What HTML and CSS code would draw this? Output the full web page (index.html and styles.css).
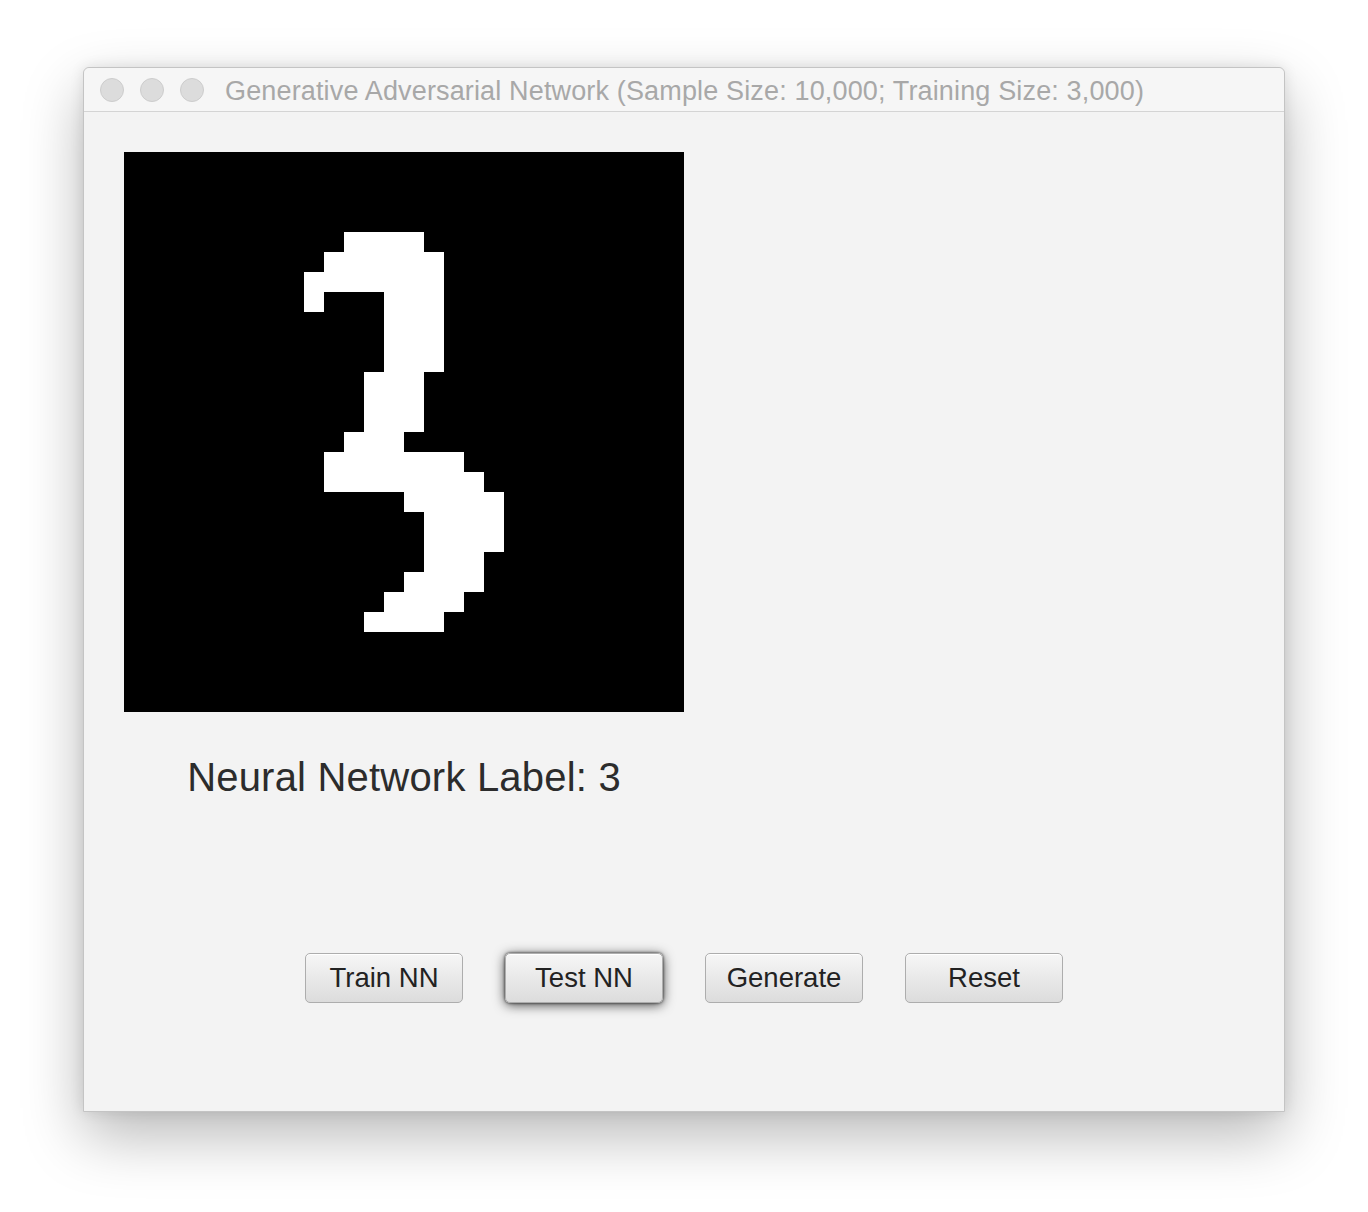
FILE: index.html
```html
<!DOCTYPE html>
<html>
<head>
<meta charset="utf-8">
<title>Generative Adversarial Network</title>
<link rel="stylesheet" href="styles.css">
</head>
<body>
<div class="window">
  <div class="titlebar">
    <div class="lights">
      <span class="light"></span>
      <span class="light"></span>
      <span class="light"></span>
    </div>
    <div class="title">Generative Adversarial Network (Sample Size: 10,000; Training Size: 3,000)</div>
  </div>
  <div class="content">
    <div class="left">
      <svg class="digit" viewBox="0 0 28 28" width="560" height="560" shape-rendering="crispEdges">
        <rect x="0" y="0" width="28" height="28" fill="#000"/>
        <g fill="#fff">
          <rect x="11" y="4" width="4" height="1"/>
          <rect x="10" y="5" width="6" height="1"/>
          <rect x="9" y="6" width="7" height="1"/>
          <rect x="9" y="7" width="1" height="1"/>
          <rect x="13" y="7" width="3" height="4"/>
          <rect x="12" y="11" width="3" height="3"/>
          <rect x="11" y="14" width="3" height="1"/>
          <rect x="10" y="15" width="7" height="1"/>
          <rect x="10" y="16" width="8" height="1"/>
          <rect x="14" y="17" width="5" height="1"/>
          <rect x="15" y="18" width="4" height="2"/>
          <rect x="15" y="20" width="3" height="1"/>
          <rect x="14" y="21" width="4" height="1"/>
          <rect x="13" y="22" width="4" height="1"/>
          <rect x="12" y="23" width="4" height="1"/>
        </g>
      </svg>
      <div class="label">Neural Network Label: 3</div>
    </div>
    <div class="buttons">
      <button class="btn">Train NN</button>
      <button class="btn focused">Test NN</button>
      <button class="btn">Generate</button>
      <button class="btn">Reset</button>
    </div>
  </div>
</div>
</body>
</html>
```
FILE: styles.css
```css
html, body {
  margin: 0;
  padding: 0;
  background: #ffffff;
}
body {
  min-height: 1212px;
  box-sizing: border-box;
  padding-top: 67px;
  padding-bottom: 100px;
  display: flex;
  justify-content: center;
  align-items: flex-start;
  font-family: "Liberation Sans", Arial, sans-serif;
}
.window {
  width: 1202px;
  height: 1045px;
  box-sizing: border-box;
  background: #f3f3f3;
  border: 1px solid #c4c4c4;
  border-radius: 6px 6px 0 0;
  box-shadow: 0 24px 60px rgba(0, 0, 0, 0.28), 0 0 14px rgba(0, 0, 0, 0.10);
  display: flex;
  flex-direction: column;
}
.titlebar {
  height: 43px;
  flex: 0 0 auto;
  background: #f6f6f6;
  border-bottom: 1px solid #d4d4d4;
  border-radius: 6px 6px 0 0;
  display: flex;
  align-items: center;
  padding-left: 16px;
}
.lights {
  display: flex;
  gap: 16px;
}
.light {
  width: 22px;
  height: 22px;
  border-radius: 50%;
  background: #dcdcdc;
  border: 1px solid #cdcdcd;
}
.title {
  margin-left: 21px;
  margin-top: 3px;
  color: #a8a8a8;
  font-family: "Liberation Sans", Arial, sans-serif;
  font-size: 27px;
  white-space: nowrap;
  letter-spacing: 0.15px;
}
.content {
  flex: 1 1 auto;
  display: flex;
  flex-direction: column;
  padding: 40px 0 0 40px;
}
.left {
  width: 560px;
  display: flex;
  flex-direction: column;
  align-items: center;
}
.digit {
  display: block;
}
.label {
  margin-top: 41px;
  font-size: 40px;
  color: #2c2c2c;
  line-height: 48px;
  white-space: nowrap;
  letter-spacing: 0.2px;
}
.buttons {
  margin-top: 152px;
  margin-left: -40px;
  display: flex;
  justify-content: center;
  gap: 42px;
}
.btn {
  width: 158px;
  height: 50px;
  box-sizing: border-box;
  border: 1px solid #adadad;
  border-radius: 5px;
  background: linear-gradient(#f6f6f6, #dcdcdc);
  box-shadow: inset 0 1px 0 #ffffff;
  font-family: "Liberation Sans", Arial, sans-serif;
  font-size: 27.5px;
  color: #222222;
  padding: 0;
}
.btn.focused {
  box-shadow: inset 0 1px 0 #ffffff, 0 0 3px rgba(0, 0, 0, 0.8), 0 2px 12px rgba(0, 0, 0, 0.7);
}
```
